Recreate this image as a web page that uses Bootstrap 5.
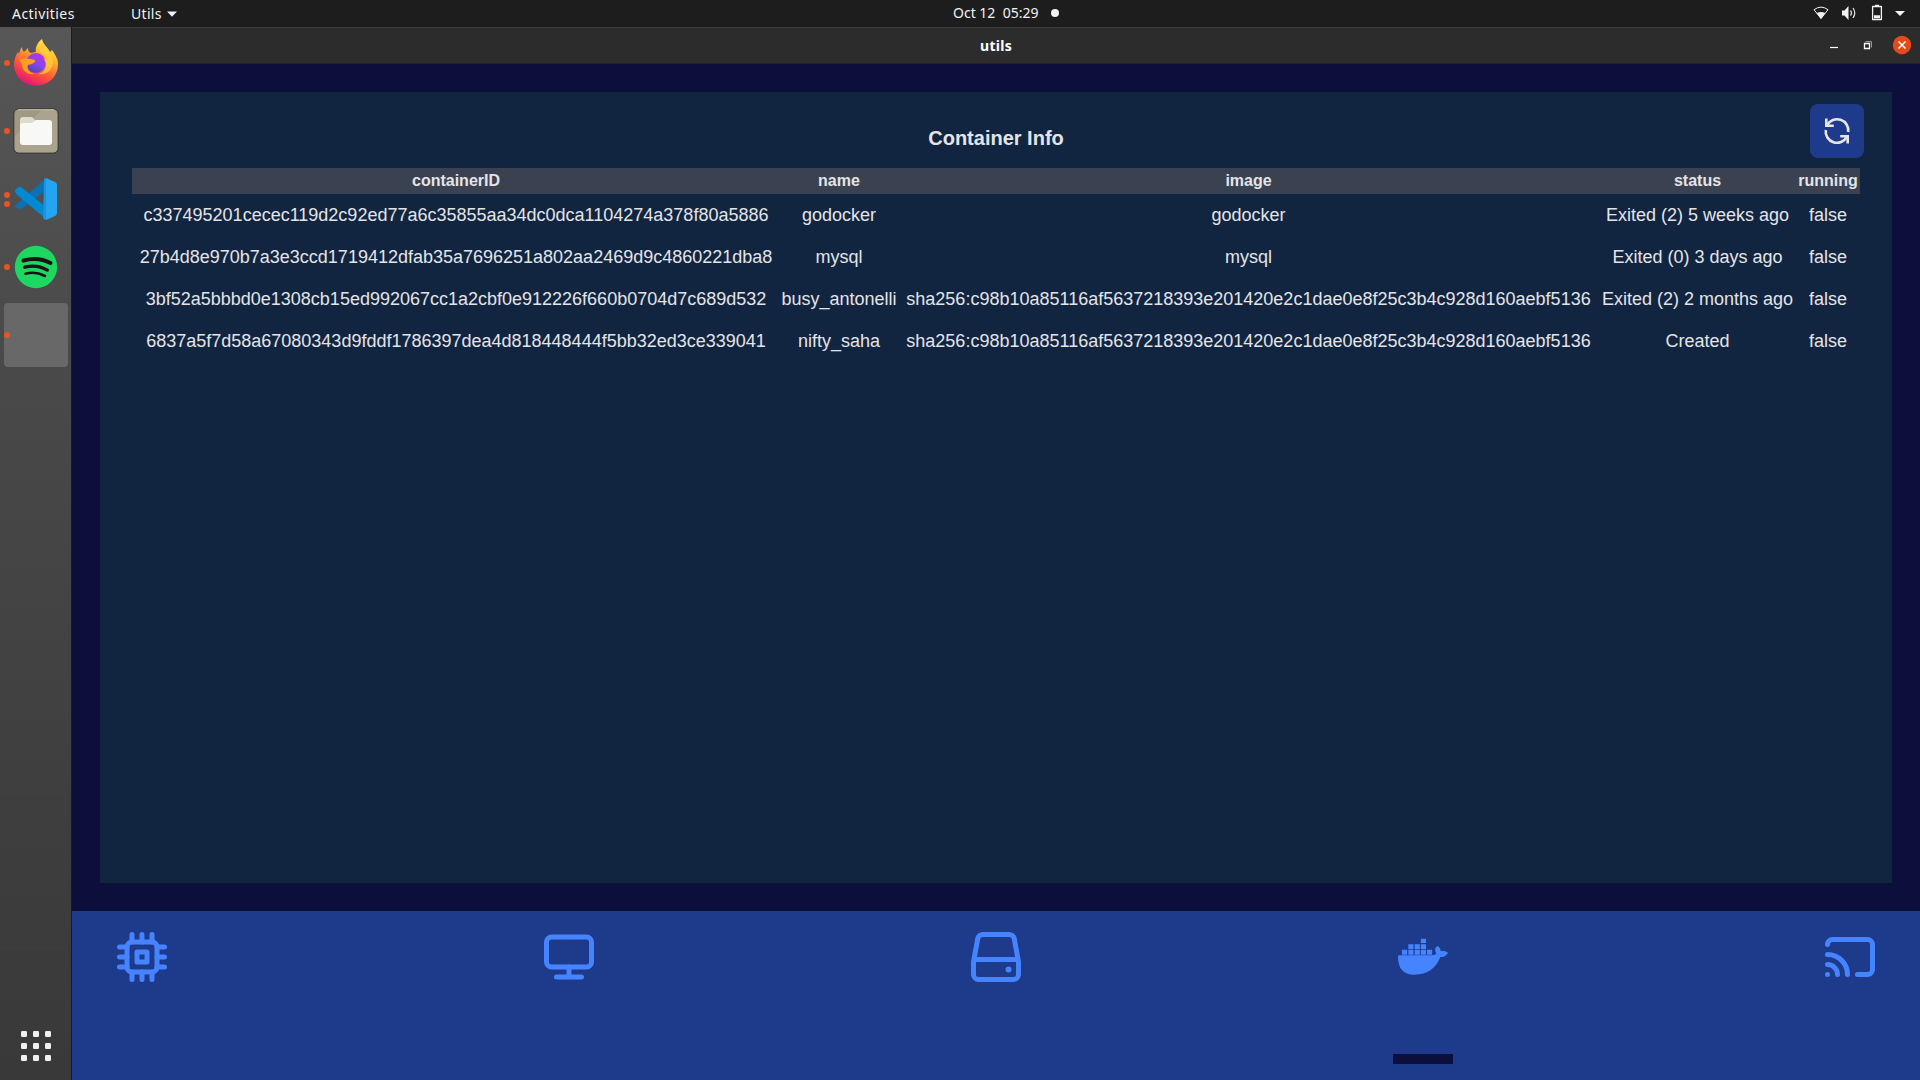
<!DOCTYPE html>
<html lang="en">
<head>
<meta charset="utf-8">
<title>utils</title>
<link href="https://cdn.jsdelivr.net/npm/bootstrap@5.3.0/dist/css/bootstrap.min.css" rel="stylesheet">
<style>
body{background:#0c0f3c;font-family:"Liberation Sans",Arial,sans-serif;color:#e4e4e6}
svg{display:block;flex:none}
.topbar{height:27px;background:#1d1d1d;font:14px/22px "Noto Sans","Open Sans",sans-serif;color:#f2f2f2;display:grid;grid-template-columns:1fr auto 1fr;padding:0 13px 0 12px}
.topbar .clock{padding:2px 0 0 95px;width:203px}
.menus{padding-top:3px}
.act{width:119px;letter-spacing:.45px}
.utl{letter-spacing:.3px}
.dotmark{width:8px;height:8px;border-radius:50%;background:#f2f2f2;margin:7px 0 0 11px}
.dock{width:72px;padding-top:2px;background:linear-gradient(#575757,#4a4a4a 30%,#3e3e3e 75%,#393939);border-right:1px solid #1b1b1b}
.dock-item{height:68px;padding-left:4px}
.dock-item .pips{width:6px;margin-right:3px;gap:3px}
.pip{width:6px;height:6px;border-radius:50%;background:#e95420}
.dock-item.current{width:64px;height:64px;margin:2px 0 2px 4px;padding-left:0;background:#686868;border-radius:4px}
.titlebar{height:37px;background:#2c2c2c;border-top:1px solid #3b3b3b;border-bottom:1px solid #232323;display:grid;grid-template-columns:1fr auto 1fr;font:bold 14px/35px "Noto Sans","Open Sans",sans-serif;color:#fff}
.wintitle{letter-spacing:.25px}
.winbtns{padding:0 9px 2px 0}
.panel{margin:28px;height:791px;background:#112541;padding:12px 28px 0 32px}
.panel-head{height:64px;display:grid;grid-template-columns:1fr auto 1fr}
.panel-head h1{font-size:20px;line-height:28px;margin:20px 0 0;transform:translateX(-2px)}
.refresh{width:54px;height:54px;border-radius:8px;background:#1e3a8a;border:0}
.grid-table{width:1728px;table-layout:fixed;text-align:center;border-collapse:collapse;font-size:18px}
.grid-table thead tr{background:#3a4151;height:26px}
.grid-table th{font-size:16px;line-height:24px;height:26px;padding:1px 0;vertical-align:top}
.grid-table td{height:42px;line-height:28px;padding:7px 0;white-space:nowrap}
.tabs{height:169px;background:#1e3a8a;padding:16px 40px 0;color:#4684ff}
.tab-item{width:60px}
.tab-mark{height:10px;background:#0c0f3c;margin-top:67px}
.ln{fill:none;stroke:currentColor;stroke-width:2;stroke-linecap:round;stroke-linejoin:round}
</style>
<script src="https://cdn.jsdelivr.net/npm/bootstrap@5.3.0/dist/js/bootstrap.bundle.min.js"></script>
</head>
<body class="vh-100 overflow-hidden d-flex flex-column">
<header class="topbar">
  <div class="d-flex align-items-start menus"><span class="act">Activities</span><span class="utl">Utils</span><svg class="ms-1 mt-2" width="12" height="6" viewBox="0 0 12 6"><path d="M1 0.500h10L6 5.700z" fill="#f2f2f2"/></svg></div>
  <div class="d-flex clock"><span class="text-nowrap" style="width:87px">Oct 12&nbsp; 05:29</span><i class="dotmark"></i></div>
  <div class="d-flex justify-content-end pt-1" style="gap:12px">
    <svg width="16" height="16" viewBox="0 0 16 16"><path d="M1 5.700Q8 .5 15 5.700L8 14.500z" fill="none" stroke="#f2f2f2" stroke-width="1"/><path d="M3.700 8.900Q8 6.900 12.300 8.900L8 15z" fill="#f2f2f2"/></svg>
    <svg width="16" height="17" viewBox="0 0 16 17"><path d="M1 6.500h2.500l4-4.500v14L3.500 11.500H1z" fill="#f2f2f2"/><path d="M9.500 6.500q2 2.500 0 5M12 4q3.500 5 0 10" fill="none" stroke="#ddd" stroke-width="1.300"/></svg>
    <svg width="14" height="17" viewBox="0 0 14 17"><path d="M3.600 2.500h8.800v13H3.600z" fill="none" stroke="#f2f2f2" stroke-width="1.300" stroke-linejoin="round"/><path d="M6 .8h4v1.500H6zM5 11.300h6v3H5z" fill="#f2f2f2"/></svg>
    <svg width="12" height="16" viewBox="1 0 12 16"><path d="M1 7h10l-5 5z" fill="#f2f2f2"/></svg>
  </div>
</header>
<div class="d-flex flex-grow-1">
  <nav class="dock d-flex flex-column">
    <div class="dock-item d-flex align-items-center"><div class="pips d-flex flex-column"><i class="pip"></i></div>
      <svg width="46" height="48" viewBox="0 1 46 48"><defs><linearGradient id="ff" x1=".8" y1="0" x2=".3" y2="1"><stop offset="0" stop-color="#fff44f"/><stop offset=".35" stop-color="#ffb02e"/><stop offset=".65" stop-color="#ff5a36"/><stop offset="1" stop-color="#e3107a"/></linearGradient><linearGradient id="fp" x1=".8" y1="0" x2=".2" y2="1"><stop offset="0" stop-color="#b833e1"/><stop offset=".5" stop-color="#8a45ef"/><stop offset="1" stop-color="#4348a8"/></linearGradient></defs>
      <path d="M9 9c0 2 1 4 2 5l4-4c0 3 1 4 3 5 2 0 3-1 5-1-1-5 2-10 6-13 1 6 6 8 8 13l2-2c4 6 6 9 6 14C45 39 35 47.500 23 47.500S1 39 1 26c0-5 2-9 4-12l1 2c1-3 1-5 3-7z" fill="url(#ff)"/><circle cx="23" cy="25" r="10" fill="url(#fp)"/><path d="M6 22c5-3 11-1 16 0 1 2-2 4-7 5-2 4 2 8 7 9-8 1-13-3-13-10z" fill="#ff9f22"/><path d="M22 14c6-2 12 2 12 8l-4-2c6 7 2 15-5 16 12 2 17-9 14-18L31 6c-4 2-4 5-4 8z" fill="#ffcf38" opacity=".75"/></svg></div>
    <div class="dock-item d-flex align-items-center"><div class="pips d-flex flex-column"><i class="pip"></i></div>
      <svg width="46" height="46" viewBox="0 0 46 46"><rect x=".8" y=".8" width="44.400" height="44.400" rx="5" fill="#9f9882" stroke="#34322e"/><path d="M2 28L29 2h11q4 0 4 4v34q0 4-4 4H6q-4 0-4-4z" fill="#aaa38e"/><path d="M5 1.800h36" stroke="#c9c4b5"/><path d="M7 30V12q0-3 3-3h8q2 0 3 2l2 2h13v10z" fill="#dedacd"/><path d="M7 18q0-3 3-3h9l4-3h13q3 0 3 3v19q0 3-3 3H10q-3 0-3-3z" fill="#f8f8f7"/></svg></div>
    <div class="dock-item d-flex align-items-center"><div class="pips d-flex flex-column"><i class="pip"></i><i class="pip"></i></div>
      <svg width="46" height="46" viewBox="0 0 46 46"><path d="M2 30L33 2v12L8 33q-1 1-2 0l-4-2z" fill="#0872b5"/><path d="M2 15q0-1 1-2l3-2q1-1 2 0l25 20v12L3 18z" fill="#008ad3"/><path d="M33 2l9 4q2 1 2 3v28q0 2-2 3l-9 4z" fill="#25a4f2"/><path d="M33 2v42q-2 0-3-2L31 3z" fill="#1b93dd"/></svg></div>
    <div class="dock-item d-flex align-items-center"><div class="pips d-flex flex-column"><i class="pip"></i></div>
      <svg width="46" height="46" viewBox="0 0 46 46"><circle cx="23" cy="23" r="21.200" fill="#1ed760"/><g fill="none" stroke="#191414" stroke-linecap="round"><path d="M10.500 16.500q15-4 27 2.600" stroke-width="4"/><path d="M11.800 23.200q12-3.300 22.500 2.900" stroke-width="3.300"/><path d="M12.500 29.700q10-2.700 19.500 2.300" stroke-width="2.600"/></g></svg></div>
    <div class="dock-item current d-flex align-items-center"><i class="pip"></i></div>
    <svg class="mt-auto mb-3" style="margin-left:20px" width="32" height="34" viewBox="0 0 32 34" fill="#f0f0f0"><g id="r"><rect x="1" y="1" width="6" height="6" rx="1.200"/><rect x="13" y="1" width="6" height="6" rx="1.200"/><rect x="25" y="1" width="6" height="6" rx="1.200"/></g><use href="#r" y="12"/><use href="#r" y="24"/></svg>
  </nav>
  <main class="flex-grow-1">
    <div class="titlebar"><span></span><span class="wintitle">utils</span>
      <div class="d-flex justify-content-end align-items-center winbtns"><svg width="92" height="20" viewBox="0 0 92 20" fill="none"><path d="M11 12.500h8" stroke="#fff" stroke-width="1.200"/><path d="M45.500 8.500h5v5h-5z" stroke="#fff" stroke-width="1.300"/><path d="M46.500 6.500h6v6" stroke="#999"/><circle cx="83" cy="10" r="9.200" fill="#e2491b"/><path d="M79.500 6.500l7 7m0-7l-7 7" stroke="#fff" stroke-width="1.500"/></svg></div>
    </div>
    <section class="panel">
      <div class="panel-head"><span></span><h1 class="fw-bold">Container Info</h1>
        <div class="d-flex justify-content-end"><button class="refresh p-0 d-flex align-items-center justify-content-center" aria-label="Refresh"><svg width="28" height="28" viewBox="0 0 28 28" fill="none" stroke="#e6e6e8" stroke-width="2.600"><path d="M4.200 8.200A11.200 11.200 0 0 1 25.200 15M2.800 13A11.200 11.200 0 0 0 23.800 19.800"/><path d="M3.300 1.500V8.700h7.500M24.700 26.500V19.300h-7.500"/></svg></button></div>
      </div>
      <table class="grid-table">
        <colgroup><col style="width:648px"><col style="width:118px"><col style="width:701px"><col style="width:197px"><col style="width:64px"></colgroup>
        <thead><tr><th>containerID</th><th>name</th><th>image</th><th>status</th><th>running</th></tr></thead>
        <tbody>
          <tr><td>c337495201cecec119d2c92ed77a6c35855aa34dc0dca1104274a378f80a5886</td><td>godocker</td><td>godocker</td><td>Exited (2) 5 weeks ago</td><td>false</td></tr>
          <tr><td>27b4d8e970b7a3e3ccd1719412dfab35a7696251a802aa2469d9c4860221dba8</td><td>mysql</td><td>mysql</td><td>Exited (0) 3 days ago</td><td>false</td></tr>
          <tr><td>3bf52a5bbbd0e1308cb15ed992067cc1a2cbf0e912226f660b0704d7c689d532</td><td>busy_antonelli</td><td>sha256:c98b10a85116af5637218393e201420e2c1dae0e8f25c3b4c928d160aebf5136</td><td>Exited (2) 2 months ago</td><td>false</td></tr>
          <tr><td>6837a5f7d58a67080343d9fddf1786397dea4d818448444f5bb32ed3ce339041</td><td>nifty_saha</td><td>sha256:c98b10a85116af5637218393e201420e2c1dae0e8f25c3b4c928d160aebf5136</td><td>Created</td><td>false</td></tr>
        </tbody>
      </table>
    </section>
    <nav class="tabs d-flex justify-content-between align-items-start">
      <div class="tab-item"><svg class="ln" width="60" height="60" viewBox="0 0 24 24"><rect x="6" y="6" width="12" height="12" rx="2"/><path d="M10 10h4v4h-4zM3 8h3M3 12h3M3 16h3M18 8h3M18 12h3M18 16h3M8 3v3M12 3v3M16 3v3M8 18v3M12 18v3M16 18v3"/></svg></div>
      <div class="tab-item"><svg class="ln" width="60" height="60" viewBox="0 0 24 24"><rect x="3" y="4" width="18" height="12" rx="2"/><path d="M12 16v4M7 20h10"/></svg></div>
      <div class="tab-item"><svg class="ln" width="60" height="60" viewBox="0 0 24 24"><path d="M3 14v5a2 2 0 0 0 2 2h14a2 2 0 0 0 2-2v-5L19.300 4.700A2 2 0 0 0 17.300 3H6.700a2 2 0 0 0-2 1.700zM3.500 13h17"/><circle cx="17" cy="17" r="1.200" fill="currentColor" stroke="none"/></svg></div>
      <div class="tab-item"><svg width="60" height="60" viewBox="69 51 180 180" fill="currentColor"><path d="M88 136H186C193 136 197 134 199 130C193 121 195 112 203 108C209 112 212 118 212 124C219 122 228 123 234 128C229 138 220 141 211 141C198 175 173 194 133 194C99 194 84 174 84 140Q84 136 88 136Z"/><path d="M96 119h15.500v15H96zM115 119h15.500v15H115zM134 119h15.500v15H134zM152.500 119H168v15h-15.500zM171 119h15.500v15H171zM115 102.500h15.500v14.500H115zM134 102.500h15.500v14.500H134zM152.500 102.500H168v14.500h-15.500zM152.500 86H168v13h-15.500z"/></svg><div class="tab-mark"></div></div>
      <div class="tab-item"><svg class="ln" width="60" height="60" viewBox="0 0 24 24"><path d="M3 19h.01M7 19a4 4 0 0 0-4-4M11 19a8 8 0 0 0-8-8M15 19h4a2 2 0 0 0 2-2V7a2 2 0 0 0-2-2H5a2 2 0 0 0-2 2"/></svg></div>
    </nav>
  </main>
</div>
</body>
</html>
